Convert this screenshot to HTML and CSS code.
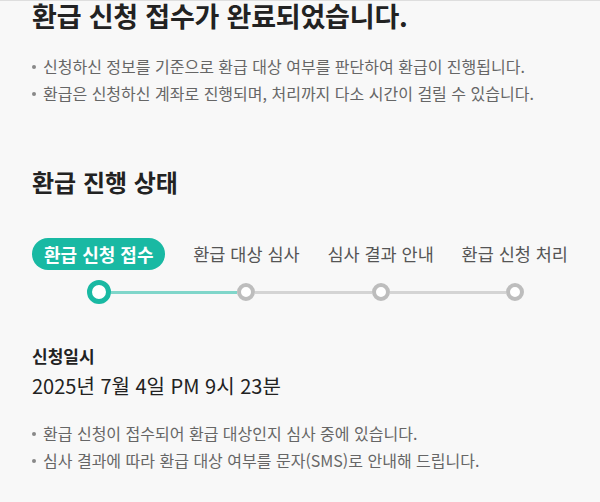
FILE: index.html
```html
<!DOCTYPE html>
<html lang="ko">
<head>
<meta charset="utf-8">
<title>환급 신청 접수</title>
<link rel="stylesheet" href="styles.css">
</head>
<body>
<main class="page">
  <h1 class="title">환급 신청 접수가 완료되었습니다.</h1>
  <ul class="notes notes--top">
    <li>신청하신 정보를 기준으로 환급 대상 여부를 판단하여 환급이 진행됩니다.</li>
    <li>환급은 신청하신 계좌로 진행되며, 처리까지 다소 시간이 걸릴 수 있습니다.</li>
  </ul>

  <section class="status">
    <h2 class="status-title">환급 진행 상태</h2>
    <ol class="steps">
      <li class="step step--active">
        <span class="step-label">환급 신청 접수</span>
        <span class="dot-row">
          <span class="line line--none"></span>
          <span class="dot dot--active"></span>
          <span class="line line--on"></span>
        </span>
      </li>
      <li class="step">
        <span class="step-label">환급 대상 심사</span>
        <span class="dot-row">
          <span class="line line--on"></span>
          <span class="dot"></span>
          <span class="line line--off"></span>
        </span>
      </li>
      <li class="step">
        <span class="step-label">심사 결과 안내</span>
        <span class="dot-row">
          <span class="line line--off"></span>
          <span class="dot"></span>
          <span class="line line--off"></span>
        </span>
      </li>
      <li class="step">
        <span class="step-label">환급 신청 처리</span>
        <span class="dot-row">
          <span class="line line--off"></span>
          <span class="dot"></span>
          <span class="line line--none"></span>
        </span>
      </li>
    </ol>
  </section>

  <section class="detail">
    <h3 class="detail-title">신청일시</h3>
    <p class="detail-value">2025년 7월 4일 PM 9시 23분</p>
    <ul class="notes notes--bottom">
      <li>환급 신청이 접수되어 환급 대상인지 심사 중에 있습니다.</li>
      <li>심사 결과에 따라 환급 대상 여부를 문자(SMS)로 안내해 드립니다.</li>
    </ul>
  </section>
</main>
</body>
</html>
```
FILE: styles.css
```css
html, body {
  margin: 0;
  padding: 0;
}

body {
  background: #f8f8f8;
  border-top: 1px solid #dedede;
  font-family: "Noto Sans CJK KR", "Noto Sans", sans-serif;
  color: #222;
}

.page {
  padding: 0 32px;
}

.title {
  margin: 0;
  font-size: 27px;
  line-height: 30px;
  font-weight: 700;
  color: #222;
  letter-spacing: -0.2px;
}

.notes {
  list-style: none;
  margin: 0;
  padding: 0;
  font-size: 16px;
  line-height: 27px;
  color: #666;
}

.notes li {
  display: flex;
  align-items: center;
  gap: 7px;
}

.notes li::before {
  content: "";
  flex: none;
  width: 4px;
  height: 4px;
  border-radius: 50%;
  background: #888;
}

.notes--top {
  margin-top: 22px;
}

.status-title {
  margin: 60px 0 0;
  font-size: 24px;
  line-height: 30px;
  font-weight: 700;
  color: #222;
}

.steps {
  list-style: none;
  margin: 41px 0 0;
  padding: 0;
  display: flex;
  justify-content: space-between;
}

.step {
  display: flex;
  flex-direction: column;
  align-items: center;
}

.step-label {
  display: block;
  height: 32px;
  font-size: 17.5px;
  line-height: 32px;
  color: #555;
  white-space: nowrap;
}

.step--active .step-label {
  background: #19b9a3;
  color: #fff;
  font-size: 18px;
  font-weight: 700;
  padding: 0 12px;
  border-radius: 16px;
}

.dot-row {
  align-self: stretch;
  display: flex;
  align-items: center;
  height: 24px;
  margin: 10px -40px 0;
}

.line {
  flex: 1;
  height: 3px;
}

.line--on {
  background: #80d6ca;
}

.line--off {
  background: #d4d4d4;
}

.line--none {
  background: transparent;
}

.dot {
  flex: none;
  box-sizing: border-box;
  width: 18px;
  height: 18px;
  border-radius: 50%;
  border: 4px solid #bdbdbd;
  background: #fff;
  position: relative;
  z-index: 1;
}

.dot--active {
  width: 24px;
  height: 24px;
  border: 5px solid #19b9a3;
}

.detail-title {
  margin: 38px 0 0;
  font-size: 17px;
  line-height: 28px;
  font-weight: 700;
  color: #222;
}

.detail-value {
  margin: 1px 0 0;
  font-size: 20px;
  line-height: 30px;
  color: #222;
}

.notes--bottom {
  margin-top: 19px;
}
```
